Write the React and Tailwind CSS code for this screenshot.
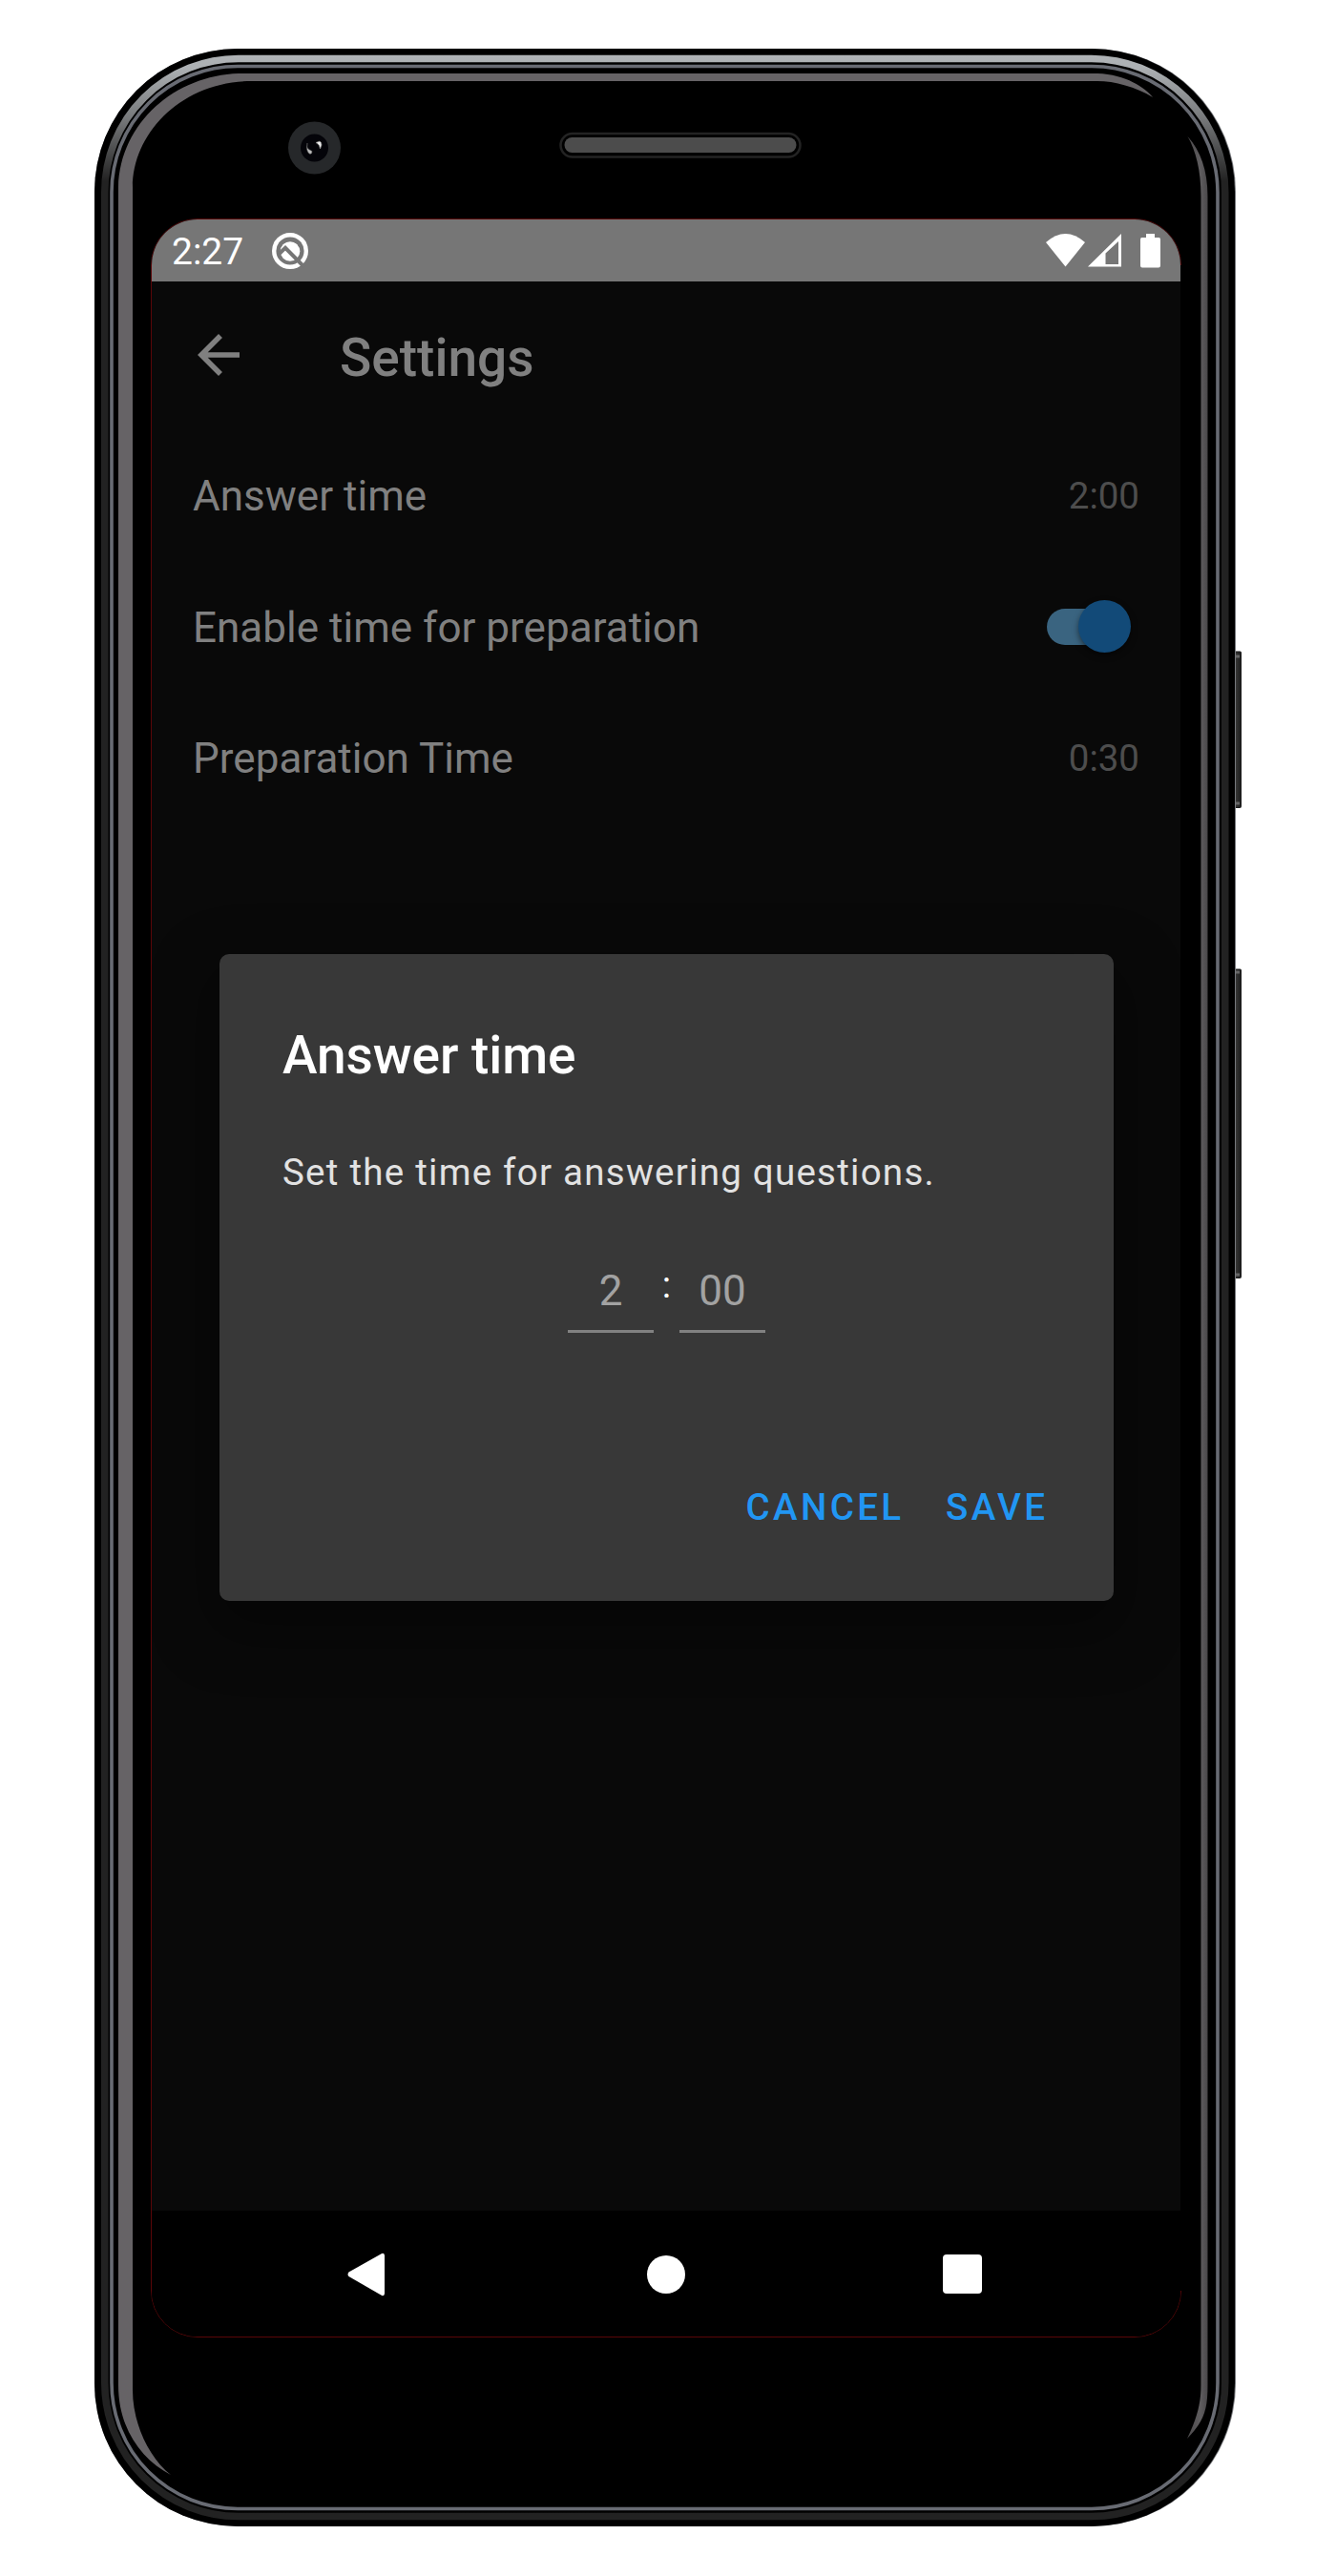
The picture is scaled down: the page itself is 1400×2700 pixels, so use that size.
function PhoneFrame() {
  return (
    <svg className="absolute inset-0" width="1400" height="2700" viewBox="0 0 1400 2700" fill="none" aria-hidden="true">
      <defs>
        <linearGradient id="rim" gradientUnits="userSpaceOnUse" x1="0" y1="58" x2="0" y2="190">
          <stop offset="0" stopColor="#afb3b6" />
          <stop offset="0.1" stopColor="#acb0b3" />
          <stop offset="0.5" stopColor="#77797b" />
          <stop offset="1" stopColor="#222222" />
        </linearGradient>
        <linearGradient id="key" x1="0" y1="0" x2="1" y2="0">
          <stop offset="0" stopColor="#3f3f3f" />
          <stop offset="0.5" stopColor="#313130" />
          <stop offset="1" stopColor="#1c1c1c" />
        </linearGradient>
        <linearGradient id="strip" x1="0" y1="0" x2="1" y2="0">
          <stop offset="0" stopColor="#4a484a" />
          <stop offset="0.65" stopColor="#5f5d5f" />
          <stop offset="1" stopColor="#4a484a" />
        </linearGradient>
      </defs>
      <rect x="1292" y="683" width="8.5" height="163.5" rx="1" fill="url(#key)" stroke="#1a1a1a" />
      <rect x="1292" y="1016" width="8.5" height="323.5" rx="1" fill="url(#key)" stroke="#1a1a1a" />
      <path d="M1295 688h4M1295 842h4M1295 1019h4M1295 1336h4" stroke="#666" strokeWidth="3" />
      <rect x="99" y="51" width="1196" height="2597" rx="150" fill="#77797d" />
      <rect x="99" y="51" width="1195" height="2597" rx="150" fill="#000" />
      <rect x="109.75" y="61.5" width="1174" height="2576" rx="140" stroke="url(#rim)" strokeWidth="7.5" />
      <rect x="117" y="69.5" width="1159" height="2560" rx="132" stroke="#686b73" strokeWidth="3.6" />
      <path
        d="M124 2500V196C126 128 184 79 250 77H1150C1180 78 1200 92 1208 102C1190 91 1168 85 1150 85H264C190 85 139 140 139 196V2505C139 2540 156 2576 179 2594C148 2578 124 2545 124 2500Z"
        fill="#666366"
      />
      <path d="M1244.500 143C1258 158 1265.500 178 1265.500 206V2500C1265.500 2528 1261 2538 1244 2556C1254 2535 1258.500 2520 1258.500 2500V206C1258.500 178 1253 158 1244.500 143Z" fill="url(#strip)" />
      <rect x="587.500" y="140" width="251" height="24.500" rx="12.250" stroke="#232323" strokeWidth="2.500" />
      <rect x="591.500" y="144" width="243" height="16" rx="8" fill="#4c4c4c" />
      <circle cx="329.500" cy="155" r="27.500" fill="#26282a" />
      <circle cx="329.500" cy="155" r="14.500" fill="#040409" />
      <path d="M331 149.500L335 148Q337 149 337 152L335.500 156Q335 151 331 149.500Z" fill="#eee" stroke="#888" strokeWidth="0.700" />
      <path d="M322 150Q321 155 323.500 156.500L327 158.500Q327 162 324 161Q320.500 158 322 150Z" fill="#bbb" stroke="#666" strokeWidth="0.500" />
      <path d="M158.500 2401V278A48.500 48.500 0 0 1 207 229.500H1189A48.500 48.500 0 0 1 1237.500 278M158.500 2401A48.500 48.500 0 0 0 207 2449.500H1189A48.500 48.500 0 0 0 1237.500 2401" stroke="#5a0608" />
    </svg>
  );
}

function StatusBar() {
  return (
    <div className="flex h-[65px] shrink-0 items-center bg-[#767676] pl-[21px] pr-[21px] text-white">
      <span className="w-[106px] pt-[3px] text-[39px] leading-[65px]">2:27</span>
      <svg className="-ml-px" width="38" height="38" viewBox="0 0 38 38" fill="none">
        <circle cx="19" cy="19" r="16.800" stroke="currentColor" strokeWidth="4.400" />
        <circle cx="19" cy="19.500" r="10.300" fill="currentColor" />
        <path d="M7.500 22L14 15.800L34 36" stroke="#767676" strokeWidth="4" />
      </svg>
      <div className="ml-auto flex items-center">
        <svg width="41" height="35" viewBox="0 0 41 35" fill="currentColor"><path d="M0 9Q20.500 -9 41 9L20.500 34.500Z" /></svg>
        <svg className="ml-[3.500px]" width="35" height="35" viewBox="0 0 35 35"><path fill="currentColor" fillRule="evenodd" d="M0 34.500L35 0V34.500ZM18.500 20.500V32H32V8Z" /></svg>
        <svg className="ml-[20px]" width="21" height="36" viewBox="0 0 21 36" fill="currentColor"><path d="M6 0H15V4H19.500Q21 4 21 6V33.500Q21 35.500 19 35.500H2Q0 35.500 0 33.500V6Q0 4 1.500 4H6Z" /></svg>
      </div>
    </div>
  );
}

function AppBar() {
  return (
    <div className="flex h-[154px] shrink-0 items-center pl-[48px] text-[#808080]">
      <svg width="44" height="44" viewBox="0 0 44 44" fill="none" stroke="currentColor" strokeWidth="5.600">
        <path d="M44 22H4M24 2L4 22L24 42" />
      </svg>
      <h1 className="ml-[105px] pt-[6px] text-[55px] font-medium leading-[64px]">Settings</h1>
    </div>
  );
}

function Row({ label, children }) {
  return (
    <div className="flex h-[137.500px] shrink-0 items-center justify-between pl-[43px] pr-[43px]">
      <span className="pt-[2px] text-[44px] tracking-[0.020px] text-[#808080]">{label}</span>
      {children}
    </div>
  );
}

function Value({ children }) {
  return <span className="pt-px text-[38.500px] text-[#4d4d4d]">{children}</span>;
}

function Toggle() {
  return (
    <span className="mr-[9px] flex h-[55px] w-[88px] items-center">
      <span className="h-[38px] w-[77px] rounded-full bg-[#3a6480]" />
      <span className="-ml-[44px] size-[55px] shrink-0 rounded-full bg-[#124a78] shadow-[0_3px_6px_rgba(0,0,0,0.5)]" />
    </span>
  );
}

function TimeField({ children }) {
  return (
    <span className="flex h-[68px] w-[90px] justify-center border-b-[3px] border-[#818181] text-[44px] leading-[48px] text-[#a2a2a2]">
      {children}
    </span>
  );
}

function Dialog() {
  return (
    <div className="absolute left-[71px] top-[770px] flex h-[678px] w-[937px] flex-col rounded-[10px] bg-[#383838] px-[66px] shadow-[0_24px_60px_12px_rgba(0,0,0,0.350)]">
      <h2 className="mt-[73px] text-[55px] font-medium leading-[66px] tracking-[-0.050px] text-white">Answer time</h2>
      <p className="mt-[65px] text-[38.500px] leading-[50px] tracking-[1.250px] text-[#e2e2e2]">Set the time for answering questions.</p>
      <div className="mt-[74.500px] flex justify-center">
        <TimeField>2</TimeField>
        <span className="w-[27px] text-center text-[38.500px] leading-[36px] text-white">:</span>
        <TimeField>00</TimeField>
      </div>
      <div className="mr-[2.500px] mt-[157.500px] flex justify-end gap-[43.500px] text-[38.500px] font-medium leading-[51px] tracking-[3.400px] text-[#2196f3]">
        <button>CANCEL</button>
        <button>SAVE</button>
      </div>
    </div>
  );
}

function NavBar() {
  return (
    <div className="flex h-[132px] shrink-0 items-center bg-black pl-[205px] pt-px text-white">
      <svg width="40" height="46" viewBox="0 0 41 46" fill="currentColor"><path d="M1.500 20.500L37 0.500Q40 -0.500 40 3V43Q40 46.500 37 45.500L1.500 25Q-0.500 23 1.500 20.500Z" /></svg>
      <span className="ml-[274px] size-[40px] rounded-full bg-white" />
      <span className="ml-[270px] size-[41px] rounded-[4px] bg-white" />
    </div>
  );
}

export default function App() {
  return (
    <div className="relative h-[2700px] w-[1400px] overflow-hidden bg-white pl-[159px] pt-[230px] font-[Roboto,sans-serif]">
      <PhoneFrame />
      <main className="relative flex h-[2219px] w-[1078px] flex-col">
        <div className="flex flex-1 flex-col overflow-hidden rounded-[48px] bg-[#090909]">
          <StatusBar />
          <AppBar />
          <div className="flex-1 pt-[1.500px]">
            <Row label="Answer time"><Value>2:00</Value></Row>
            <Row label="Enable time for preparation"><Toggle /></Row>
            <Row label="Preparation Time"><Value>0:30</Value></Row>
          </div>
          <NavBar />
        </div>
        <Dialog />
      </main>
    </div>
  );
}
